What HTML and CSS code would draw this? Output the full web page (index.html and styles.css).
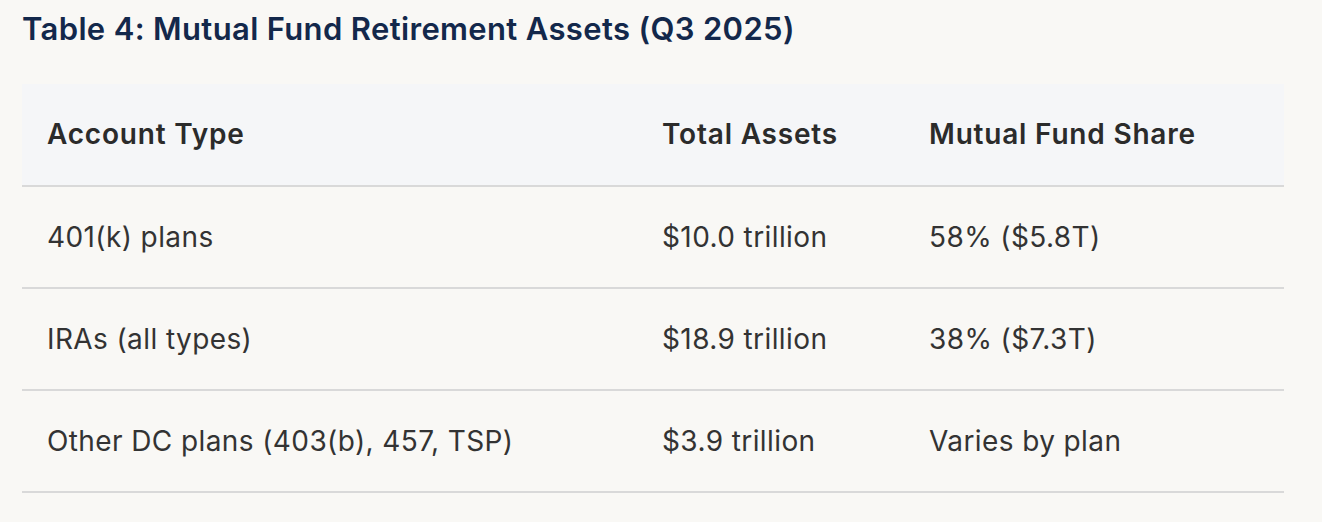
FILE: index.html
```html
<!DOCTYPE html>
<html lang="en">
<head>
<meta charset="utf-8">
<title>Mutual Fund Retirement Assets</title>
<link rel="stylesheet" href="styles.css">
</head>
<body>
<main class="page">
  <h2 class="table-title">Table 4: Mutual Fund Retirement Assets (Q3 2025)</h2>
  <table class="data-table">
    <colgroup>
      <col class="col-type">
      <col class="col-assets">
      <col class="col-share">
    </colgroup>
    <thead>
      <tr>
        <th>Account Type</th>
        <th>Total Assets</th>
        <th>Mutual Fund Share</th>
      </tr>
    </thead>
    <tbody>
      <tr>
        <td>401(k) plans</td>
        <td>$10.0 trillion</td>
        <td>58% ($5.8T)</td>
      </tr>
      <tr>
        <td>IRAs (all types)</td>
        <td>$18.9 trillion</td>
        <td>38% ($7.3T)</td>
      </tr>
      <tr>
        <td>Other DC plans (403(b), 457, TSP)</td>
        <td>$3.9 trillion</td>
        <td>Varies by plan</td>
      </tr>
    </tbody>
  </table>
</main>
</body>
</html>
```
FILE: styles.css
```css
html, body {
  margin: 0;
  padding: 0;
  background: #f9f8f5;
}

body {
  font-family: Inter, "Noto Sans", "Liberation Sans", sans-serif;
  color: #2f2f2f;
}

.page {
  padding: 11px 38px 0 22px;
}

.table-title {
  margin: 0 0 37px;
  font-size: 31px;
  line-height: 36px;
  font-weight: 600;
  letter-spacing: 0.35px;
  color: #13284b;
}

.data-table {
  width: 1262px;
  border-collapse: collapse;
  table-layout: fixed;
}

.col-type { width: 615px; }
.col-assets { width: 267px; }
.col-share { width: 380px; }

.data-table th,
.data-table td {
  text-align: left;
  padding: 34px 25px 34px;
  font-size: 28px;
  line-height: 32px;
  letter-spacing: 0.4px;
  border-bottom: 2px solid #d9d9d9;
}

.data-table thead th {
  background: #f5f6f8;
  font-weight: 600;
  letter-spacing: 0.8px;
  color: #2b2b2b;
  padding-bottom: 35px;
}

.data-table td {
  font-weight: 400;
  color: #333333;
}
```
